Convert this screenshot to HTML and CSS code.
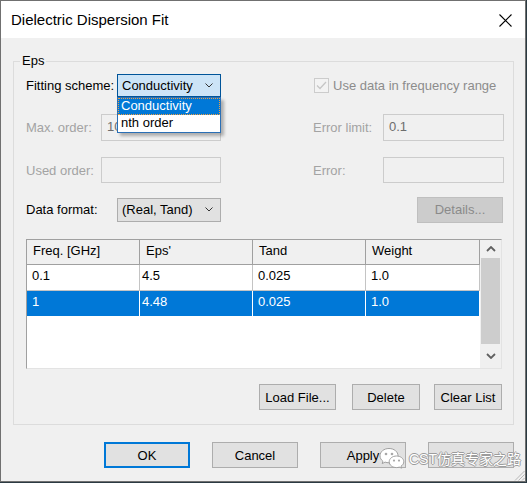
FILE: index.html
```html
<!DOCTYPE html>
<html>
<head>
<meta charset="utf-8">
<title>Dielectric Dispersion Fit</title>
<link rel="stylesheet" href="styles.css">
</head>
<body>
<div class="window">
  <div class="titlebar">
    <span class="title">Dielectric Dispersion Fit</span>
    <svg class="close" width="13" height="13" viewBox="0 0 13 13"><path d="M0.5 0.5 L12.5 12.5 M12.5 0.5 L0.5 12.5" stroke="#000" stroke-width="1.1" fill="none"/></svg>
  </div>
  <div class="body">
    <div class="group">
      <div class="legend">Eps</div>

      <div class="row r1">
        <div class="left">
          <span class="lbl w91">Fitting scheme:</span>
          <div class="combo focus">
            <span class="combo-text">Conductivity</span>
            <svg class="chev" width="8" height="5" viewBox="0 0 8 5"><polyline points="0.5,0.5 4,4 7.5,0.5" fill="none" stroke="#333" stroke-width="1"/></svg>
            <div class="droplist">
              <div class="item hl">Conductivity</div>
              <div class="item">nth order</div>
            </div>
          </div>
        </div>
        <div class="right">
          <svg class="check" width="15" height="15" viewBox="0 0 15 15"><rect x="0.5" y="0.5" width="14" height="14" fill="#f3f3f3" stroke="#cccccc"/><polyline points="3,7.5 6,10.5 12,4" fill="none" stroke="#c6c6c6" stroke-width="1.3"/></svg>
          <span class="cblbl">Use data in frequency range</span>
        </div>
      </div>

      <div class="row r2">
        <div class="left">
          <span class="lbl dis w75">Max. order:</span>
          <div class="tbox w120">10</div>
        </div>
        <div class="right">
          <span class="lbl dis w70">Error limit:</span>
          <div class="tbox w121">0.1</div>
        </div>
      </div>

      <div class="row r3">
        <div class="left">
          <span class="lbl dis w75">Used order:</span>
          <div class="tbox w120"></div>
        </div>
        <div class="right">
          <span class="lbl dis w70">Error:</span>
          <div class="tbox w121"></div>
        </div>
      </div>

      <div class="row r4">
        <div class="left">
          <span class="lbl w91">Data format:</span>
          <div class="combo plain">
            <span class="combo-text">(Real, Tand)</span>
            <svg class="chev" width="8" height="5" viewBox="0 0 8 5"><polyline points="0.5,0.5 4,4 7.5,0.5" fill="none" stroke="#333" stroke-width="1"/></svg>
          </div>
        </div>
        <div class="right">
          <div class="btn disabled details">Details...</div>
        </div>
      </div>

      <div class="grid">
        <table class="data">
          <colgroup><col class="c1"><col class="c2"><col class="c3"><col class="c4"></colgroup>
          <thead>
            <tr><th>Freq. [GHz]</th><th>Eps'</th><th>Tand</th><th>Weight</th></tr>
          </thead>
          <tbody>
            <tr><td>0.1</td><td class="eps">4.5</td><td>0.025</td><td>1.0</td></tr>
            <tr class="sel"><td>1</td><td class="eps">4.48</td><td>0.025</td><td>1.0</td></tr>
          </tbody>
        </table>
        <div class="vscroll">
          <div class="sb-btn up"><svg width="10" height="6" viewBox="0 0 10 6"><polyline points="1,5 5,1 9,5" fill="none" stroke="#606060" stroke-width="1.8"/></svg></div>
          <div class="thumb"></div>
          <div class="sb-btn down"><svg width="10" height="6" viewBox="0 0 10 6"><polyline points="1,1 5,5 9,1" fill="none" stroke="#606060" stroke-width="1.8"/></svg></div>
        </div>
      </div>

      <div class="listbtns">
        <div class="btn w77">Load File...</div>
        <div class="btn w68 g16">Delete</div>
        <div class="btn w68 g14">Clear List</div>
      </div>
    </div>

    <div class="footer">
      <div class="btn fbtn default">OK</div>
      <div class="btn fbtn">Cancel</div>
      <div class="btn fbtn">Apply</div>
      <div class="btn fbtn" aria-label="Help"></div>
    </div>
  </div>

  <div class="watermark">
    <svg width="26" height="22" viewBox="0 0 26 22">
      <path d="M10 1.5 C4.8 1.5 1 4.8 1 8.8 C1 11 2.1 12.9 3.9 14.2 L3.2 16.6 L6.1 15.1 C7.3 15.5 8.6 15.8 10 15.8 C15.2 15.8 19 12.6 19 8.7 C19 4.8 15.2 1.5 10 1.5 Z" fill="#fff" stroke="#a0a0a0" stroke-width="1"/>
      <circle cx="7" cy="7" r="1.3" fill="#a8a8a8"/>
      <circle cx="13" cy="7" r="1.3" fill="#a8a8a8"/>
      <path d="M17.5 9 C13.4 9 10.2 11.6 10.2 14.8 C10.2 18 13.4 20.6 17.5 20.6 C18.5 20.6 19.4 20.4 20.3 20.1 L22.6 21.2 L22 19.2 C23.7 18.1 24.8 16.6 24.8 14.8 C24.8 11.6 21.6 9 17.5 9 Z" fill="#fff" stroke="#a0a0a0" stroke-width="1"/>
      <circle cx="15" cy="13.6" r="1.1" fill="#a8a8a8"/>
      <circle cx="20" cy="13.6" r="1.1" fill="#a8a8a8"/>
    </svg>
    <span class="wm-text">CST仿真专家之路</span>
  </div>

  <svg class="grip" width="11" height="11" viewBox="0 0 11 11">
    <path d="M10.5 1 L1 10.5 M10.5 4.5 L4.5 10.5 M10.5 8 L8 10.5" stroke="#b8b8b8" stroke-width="1" fill="none"/>
  </svg>
</div>
</body>
</html>
```

FILE: styles.css
```css
* { box-sizing: border-box; }

html, body {
  margin: 0;
  padding: 0;
}

body {
  background: #2b3a42;
  width: 527px;
  height: 483px;
  overflow: hidden;
  font-family: "Liberation Sans", Arial, "Noto Sans CJK SC", sans-serif;
  font-size: 13px;
  color: #000;
}

.window {
  position: relative;
  width: 526px;
  height: 482px;
  border: 1px solid #707070;
  background: #f0f0f0;
  display: flex;
  flex-direction: column;
}

.titlebar {
  height: 37px;
  background: #fff;
  display: flex;
  align-items: center;
  padding-left: 10px;
  flex: none;
}

.title {
  font-size: 15px;
  flex: 1;
  line-height: 18px;
  padding-top: 1px;
}

.close {
  margin-right: 13px;
  margin-top: 1px;
}

.body {
  flex: 1;
  padding: 23px 0 0 12px;
}

.group {
  width: 501px;
  border: 1px solid #dcdcdc;
  padding: 0 11px 14px 12px;
}

.legend {
  width: max-content;
  margin: -9px 0 0 -6px;
  padding: 0 2px;
  background: #f0f0f0;
  line-height: 16px;
}

.row {
  display: flex;
  align-items: center;
}

.left {
  width: 287px;
  height: 100%;
  display: flex;
  align-items: center;
  flex: none;
}

.right {
  height: 100%;
  display: flex;
  align-items: center;
}

.r1 { margin-top: 5px; height: 23px; }
.r2 { margin-top: 17px; height: 27px; }
.r3 { margin-top: 16px; height: 26px; }
.r4 { margin-top: 13px; height: 27px; }

.lbl { flex: none; white-space: nowrap; }
.w91 { width: 91px; }
.w75 { width: 75px; }
.w70 { width: 70px; }
.dis { color: #a3a3a3; }

.combo {
  position: relative;
  width: 104px;
  height: 23px;
  display: flex;
  align-items: center;
  padding: 0 7px 0 4px;
  border: 1px solid #adadad;
  background: #e1e1e1;
}

.combo.focus {
  background: #cce4f7;
  border-color: #005499;
}

.combo.plain { height: 24px; }

.combo-text { flex: 1; white-space: nowrap; }

.chev { flex: none; }

.droplist {
  position: absolute;
  top: 22px;
  left: -1px;
  width: 104px;
  background: #fff;
  border: 1px solid #2a6fb5;
  box-shadow: 3px 3px 3px rgba(0, 0, 0, 0.28);
  z-index: 5;
}

.item {
  height: 17px;
  line-height: 16px;
  padding-left: 3px;
  white-space: nowrap;
}

.item.hl {
  background: #0078d7;
  color: #fff;
  outline: 1px dotted #f0a040;
  outline-offset: -1px;
}

.check { margin-left: 1px; flex: none; }

.cblbl {
  margin-left: 4px;
  color: #8c8c8c;
  white-space: nowrap;
}

.tbox {
  height: 100%;
  border: 1px solid #cccccc;
  background: #f0f0f0;
  color: #6d6d6d;
  padding: 4px 5px 0;
  line-height: 16px;
  flex: none;
}

.w120 { width: 120px; }
.w121 { width: 121px; }

.btn {
  height: 26px;
  display: flex;
  align-items: center;
  justify-content: center;
  background: #e1e1e1;
  border: 1px solid #adadad;
  white-space: nowrap;
}

.btn.disabled {
  background: #cccccc;
  border-color: #bfbfbf;
  color: #8a8a8a;
}

.details {
  width: 86px;
  margin-left: 104px;
}

.grid {
  margin-top: 16px;
  height: 130px;
  display: flex;
  align-items: flex-start;
  background: #fff;
  border-top: 1px solid #a0a0a0;
  border-left: 1px solid #a0a0a0;
  border-right: 1px solid #e3e3e3;
  border-bottom: 1px solid #e3e3e3;
}

.data {
  width: 453px;
  table-layout: fixed;
  border-collapse: separate;
  border-spacing: 0;
  flex: none;
}

.c1, .c2, .c3 { width: 113px; }
.c4 { width: 114px; }

.data th {
  font-weight: normal;
  text-align: left;
  background: #f0f0f0;
  line-height: 16px;
  padding: 3px 6px 5px;
  border-right: 1px solid #a0a0a0;
  border-bottom: 1px solid #a0a0a0;
  white-space: nowrap;
}

.data td {
  line-height: 16px;
  padding: 3px 5px 6px;
  border-right: 1px solid #c4c4c4;
  border-bottom: 1px solid #c4c4c4;
  white-space: nowrap;
}

.data td.eps { padding-left: 2px; }

.data tr.sel td {
  background: #0078d7;
  color: #fff;
  border-right-color: #ffffff;
  border-bottom-color: #ffffff;
}

.vscroll {
  width: 21px;
  height: 128px;
  background: #f0f0f0;
  display: flex;
  flex-direction: column;
  flex: none;
}

.sb-btn {
  display: flex;
  align-items: center;
  justify-content: center;
}

.sb-btn.up { height: 18px; }
.sb-btn.down { height: 24px; }

.thumb {
  height: 86px;
  margin: 0 1px;
  background: #cdcdcd;
}

.listbtns {
  margin-top: 15px;
  display: flex;
  justify-content: flex-end;
}

.w77 { width: 77px; }
.w68 { width: 68px; }
.g16 { margin-left: 16px; }
.g14 { margin-left: 14px; }

.footer {
  margin-top: 17px;
  padding-left: 91px;
  display: flex;
  gap: 22px;
}

.fbtn { width: 86px; }

.fbtn.default {
  border: 2px solid #0078d7;
}

.watermark {
  position: absolute;
  left: 378px;
  top: 446px;
  display: flex;
  align-items: center;
  gap: 4px;
  z-index: 10;
}

.wm-text {
  font-size: 14px;
  color: #fff;
  font-family: "Liberation Sans", "Noto Sans CJK SC", sans-serif;
  text-shadow: 1px 0 0 #9c9c9c, -1px 0 0 #9c9c9c, 0 1px 0 #9c9c9c, 0 -1px 0 #9c9c9c;
  white-space: nowrap;
}

.grip {
  position: absolute;
  right: 0;
  bottom: 0;
}
```
